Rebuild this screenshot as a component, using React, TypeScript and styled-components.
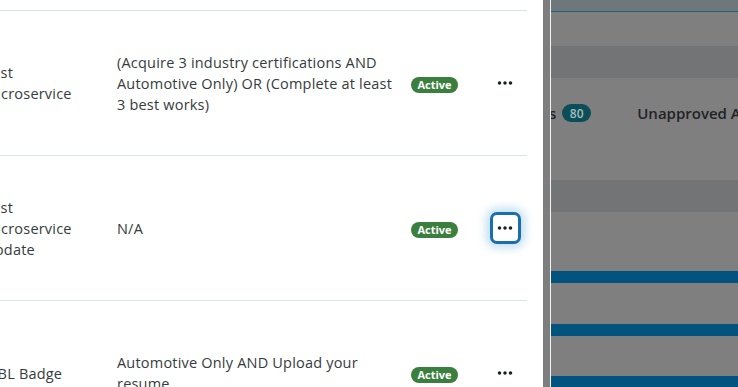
import React from "react";
import styled, { createGlobalStyle } from "styled-components";

const Global = createGlobalStyle`
  html, body { margin: 0; padding: 0; background: #ffffff; }
  body { font-family: "Open Sans", "Noto Sans", sans-serif; }
  #root { height: 100vh; }
`;

const Screen = styled.div`
  display: flex;
  height: 387px;
  width: 738px;
  overflow: hidden;
`;

const Drawer = styled.div`
  flex: none;
  width: 543px;
  height: 100%;
  background: #ffffff;
  overflow: hidden;
`;

const TableBody = styled.div`
  margin-top: -134px;
  margin-left: -16px;
  width: 543px;
`;

const Row = styled.div`
  display: flex;
  align-items: center;
  box-sizing: border-box;
  height: 145px;
  border-bottom: 1px solid #dbe5e9;
  color: #363b40;
  font-size: 14.5px;
  letter-spacing: 0.2px;
  line-height: 21px;
`;

const NameCell = styled.div`
  flex: none;
  width: 98px;
`;

const CriteriaCell = styled.div`
  flex: none;
  width: 280px;
  margin-left: 35px;
`;

const StatusCell = styled.div`
  flex: none;
  margin-left: 14px;
  width: 47px;
`;

const ActionCell = styled.div`
  flex: none;
  margin-left: 31px;
  width: 32px;
  display: flex;
  justify-content: center;
`;

const ActiveBadge = styled.span`
  display: inline-flex;
  align-items: center;
  justify-content: center;
  width: 47px;
  height: 16px;
  border-radius: 8px;
  background: #3a7f3d;
  color: #ffffff;
  font-size: 11px;
  font-weight: 700;
  letter-spacing: 0;
  line-height: 16px;
`;

const MenuButton = styled.button<{ $focused?: boolean }>`
  display: flex;
  align-items: center;
  justify-content: center;
  box-sizing: border-box;
  width: 31px;
  height: 32px;
  padding: 0;
  border-radius: 7px;
  background: #ffffff;
  cursor: pointer;
  border: 3px solid ${(p) => (p.$focused ? "#1a6eac" : "transparent")};
  box-shadow: ${(p) =>
    p.$focused ? "0 0 9px 4px rgba(40, 140, 210, 0.28)" : "none"};
`;

const Dots = () => (
  <svg width="16" height="4" viewBox="0 0 16 4" aria-hidden>
    <circle cx="2.5" cy="2" r="1.75" fill="#1c1f22" />
    <circle cx="8" cy="2" r="1.75" fill="#1c1f22" />
    <circle cx="13.5" cy="2" r="1.75" fill="#1c1f22" />
  </svg>
);

const Gutter = styled.div`
  flex: none;
  width: 7px;
  height: 100%;
  background: #7d7d7d;
`;

const Divider = styled.div`
  flex: none;
  width: 1px;
  height: 100%;
  background: #f4f4f4;
`;

const Backdrop = styled.div`
  flex: 1;
  display: flex;
  flex-direction: column;
  height: 100%;
  background: #7f7f7f;
  overflow: hidden;
`;

const Band = styled.div<{ $h: number; $bg: string }>`
  flex: none;
  height: ${(p) => p.$h}px;
  background: ${(p) => p.$bg};
`;

const HeaderBar = styled.div`
  flex: none;
  height: 11px;
  background: #6e7779;
  border-bottom: 1px solid #245d82;
`;

const TabsRow = styled.div`
  flex: none;
  height: 102px;
  display: flex;
  align-items: center;
  gap: 46px;
  margin-left: -84px;
  white-space: nowrap;
  font-size: 15px;
  font-weight: 600;
  color: #1f2327;
  padding-bottom: 32px;
  box-sizing: border-box;
`;

const Tab = styled.div`
  display: flex;
  align-items: center;
  gap: 6px;
`;

const CountBadge = styled.span`
  display: inline-flex;
  align-items: center;
  justify-content: center;
  width: 29px;
  height: 18px;
  border-radius: 9px;
  background: #0b4e57;
  color: #a3bcbf;
  font-size: 12px;
  font-weight: 600;
`;

type Item = {
  name: string;
  criteria: string;
  focused?: boolean;
};

const items: Item[] = [
  { name: "Portfolio Badge", criteria: "Upload your resume" },
  {
    name: "Test Microservice",
    criteria:
      "(Acquire 3 industry certifications AND Automotive Only) OR (Complete at least 3 best works)",
  },
  { name: "Test Microservice Update", criteria: "N/A", focused: true },
  { name: "WBL Badge", criteria: "Automotive Only AND Upload your resume" },
];

export default function App() {
  return (
    <>
      <Global />
      <Screen>
        <Drawer>
          <TableBody>
            {items.map((it) => (
              <Row key={it.name}>
                <NameCell>{it.name}</NameCell>
                <CriteriaCell>{it.criteria}</CriteriaCell>
                <StatusCell>
                  <ActiveBadge>Active</ActiveBadge>
                </StatusCell>
                <ActionCell>
                  <MenuButton $focused={it.focused} aria-label="More actions">
                    <Dots />
                  </MenuButton>
                </ActionCell>
              </Row>
            ))}
          </TableBody>
        </Drawer>
        <Gutter />
        <Divider />
        <Backdrop>
          <HeaderBar />
          <Band $h={34} $bg="#7f7f7f" />
          <Band $h={32} $bg="#737475" />
          <TabsRow>
            <Tab>
              Applications
              <CountBadge>80</CountBadge>
            </Tab>
            <Tab>Unapproved Applications</Tab>
          </TabsRow>
          <Band $h={32} $bg="#737475" />
          <Band $h={59} $bg="#7f7f7f" />
          <Band $h={12} $bg="#02547f" />
          <Band $h={41} $bg="#7f7f7f" />
          <Band $h={12} $bg="#02547f" />
          <Band $h={40} $bg="#7f7f7f" />
          <Band $h={12} $bg="#02547f" />
        </Backdrop>
      </Screen>
    </>
  );
}
